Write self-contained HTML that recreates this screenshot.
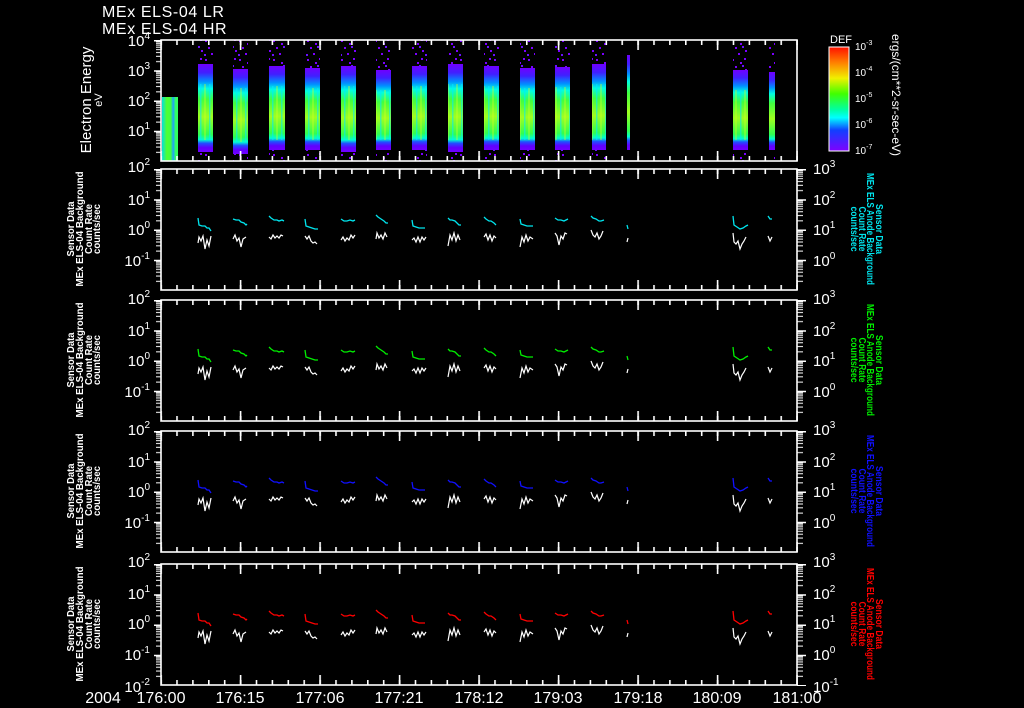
<!DOCTYPE html>
<html><head><meta charset="utf-8"><style>
html,body{margin:0;padding:0;background:#000;}
svg{display:block;}
text{font-family:"Liberation Sans",sans-serif;fill:#fff;}
</style></head><body>
<svg width="1024" height="708" viewBox="0 0 1024 708" xmlns="http://www.w3.org/2000/svg">
<defs>
<pattern id="mx" patternUnits="userSpaceOnUse" x="160.3" y="0" width="15.9" height="1"><rect x="0" y="0" width="1.6" height="1" fill="#fff"/></pattern>
<pattern id="Mx" patternUnits="userSpaceOnUse" x="160.3" y="0" width="79.5" height="1"><rect x="0" y="0" width="1.6" height="1" fill="#fff"/></pattern>
<pattern id="ly" patternUnits="userSpaceOnUse" x="154" y="0" width="7" height="30.25">
<rect x="0" y="0" width="7" height="1.5" fill="#fff"/>
<rect x="2" y="1.3" width="5" height="1" fill="#fff"/><rect x="2" y="2.8" width="5" height="1" fill="#fff"/><rect x="2" y="4.6" width="5" height="1" fill="#fff"/><rect x="2" y="6.7" width="5" height="1" fill="#fff"/><rect x="2" y="9.1" width="5" height="1" fill="#fff"/><rect x="2" y="12" width="5" height="1" fill="#fff"/><rect x="2" y="15.8" width="5" height="1" fill="#fff"/><rect x="2" y="21.1" width="5" height="1" fill="#fff"/>
</pattern>
<pattern id="ry" patternUnits="userSpaceOnUse" x="797" y="0" width="9" height="30.25">
<rect x="0" y="0" width="9" height="1.5" fill="#fff"/>
<rect x="0" y="1.3" width="6" height="1" fill="#fff"/><rect x="0" y="2.8" width="6" height="1" fill="#fff"/><rect x="0" y="4.6" width="6" height="1" fill="#fff"/><rect x="0" y="6.7" width="6" height="1" fill="#fff"/><rect x="0" y="9.1" width="6" height="1" fill="#fff"/><rect x="0" y="12" width="6" height="1" fill="#fff"/><rect x="0" y="15.8" width="6" height="1" fill="#fff"/><rect x="0" y="21.1" width="6" height="1" fill="#fff"/>
</pattern>
<pattern id="spk" patternUnits="userSpaceOnUse" x="0" y="0" width="17" height="19">
<rect x="1" y="2" width="2" height="2" fill="#7a00ff"/><rect x="9" y="5" width="2" height="2" fill="#7a00ff"/><rect x="13" y="1" width="2" height="2" fill="#7a00ff"/><rect x="4" y="9" width="2" height="2" fill="#7a00ff"/><rect x="14" y="12" width="2" height="2" fill="#7a00ff"/><rect x="7" y="15" width="2" height="2" fill="#7a00ff"/><rect x="0" y="16" width="2" height="2" fill="#6a10ff"/><rect x="11" y="8" width="2" height="2" fill="#6a10ff"/>
</pattern>
<pattern id="str" patternUnits="userSpaceOnUse" x="0" y="0" width="9" height="10">
<rect x="2" y="0" width="1.5" height="10" fill="#00e8ff" opacity="0.55"/><rect x="6" y="0" width="2" height="10" fill="#d0ff20" opacity="0.35"/>
</pattern>
<linearGradient id="sg" x1="0" y1="0" x2="0" y2="1">
<stop offset="0" stop-color="#7000ff"/><stop offset="0.1" stop-color="#4020ff"/><stop offset="0.2" stop-color="#0090ff"/><stop offset="0.28" stop-color="#00ffe0"/><stop offset="0.4" stop-color="#40ff40"/><stop offset="0.6" stop-color="#a0ff20"/><stop offset="0.8" stop-color="#30ff50"/><stop offset="0.86" stop-color="#00ffd0"/><stop offset="0.9" stop-color="#2050ff"/><stop offset="0.95" stop-color="#6000ff"/><stop offset="1" stop-color="#7000ff"/>
</linearGradient>
<linearGradient id="sh" x1="0" y1="0" x2="1" y2="0">
<stop offset="0" stop-color="#00e0e0"/><stop offset="0.3" stop-color="#50ff30"/><stop offset="0.55" stop-color="#40ff40"/><stop offset="0.7" stop-color="#20a0ff"/><stop offset="0.85" stop-color="#30ff60"/><stop offset="1" stop-color="#30ff60"/>
</linearGradient>
<linearGradient id="cb" x1="0" y1="0" x2="0" y2="1">
<stop offset="0" stop-color="#ff1000"/><stop offset="0.15" stop-color="#ff8000"/><stop offset="0.3" stop-color="#f0f000"/><stop offset="0.45" stop-color="#40ff00"/><stop offset="0.6" stop-color="#00ffa0"/><stop offset="0.68" stop-color="#00ffff"/><stop offset="0.8" stop-color="#1040ff"/><stop offset="1" stop-color="#8000ff"/>
</linearGradient>
<g id="frame">
<rect x="161" y="0" width="636" height="121" fill="none" stroke="#fff" stroke-width="1.6"/>
<rect x="161" y="0" width="637" height="5" fill="url(#mx)"/>
<rect x="161" y="0" width="637" height="10" fill="url(#Mx)"/>
<rect x="161" y="116" width="637" height="5" fill="url(#mx)"/>
<rect x="161" y="111" width="637" height="10" fill="url(#Mx)"/>
<rect x="154" y="0" width="7" height="121" fill="url(#ly)"/>
</g>
<g id="col" fill="none" stroke="currentColor" stroke-width="1.3">
<path d="M198 49 L199 56 L202 57 L205 57 L207 59 L209 59 L211 62"/>
<path d="M233 50 L236 51 L239 51 L241 53 L244 54 L246 56 L247 55"/>
<path d="M269 47 L271 49 L274 51 L277 51 L279 52 L282 51 L284 52"/>
<path d="M305 50 L306 57 L309 58 L312 59 L315 60 L318 60"/>
<path d="M341 50 L344 52 L347 52 L350 51 L353 52 L355 51"/>
<path d="M376 46 L378 48 L381 50 L384 52 L386 54 L388 54"/>
<path d="M412 51 L413 57 L416 58 L419 59 L422 59 L425 59"/>
<path d="M448 49 L450 51 L452 51 L455 52 L457 54 L459 56 L461 56"/>
<path d="M484 48 L486 50 L489 52 L491 52 L494 54 L496 56"/>
<path d="M520 50 L521 55 L524 56 L527 57 L530 57 L533 57"/>
<path d="M555 49 L558 51 L561 51 L564 52 L566 51 L568 50"/>
<path d="M591 47 L593 49 L596 50 L599 52 L601 52 L604 51"/>
<path d="M627 56 L628 60"/>
<path d="M733 47 L734 56 L737 58 L740 60 L743 59 L746 57 L748 56"/>
<path d="M768 47 L770 50 L772 50"/>
</g>
<g id="wht" fill="none" stroke="#fff" stroke-width="1.2">
<path d="M198 74 L199 68 L201 72 L203 67 L205 80 L207 71 L209 77 L211 67"/>
<path d="M233 70 L235 66 L237 72 L239 69 L241 78 L243 70 L246 68"/>
<path d="M269 68 L271 70 L273 66 L275 69 L277 67 L279 69 L281 66 L283 67"/>
<path d="M305 67 L307 70 L309 67 L311 72 L313 74 L315 73 L317 75"/>
<path d="M341 71 L343 68 L345 72 L347 69 L349 71 L351 66 L353 69 L355 66"/>
<path d="M376 70 L377 64 L379 69 L381 66 L383 70 L385 64 L387 68"/>
<path d="M412 71 L414 69 L416 73 L418 68 L420 73 L422 68 L424 71 L426 68"/>
<path d="M448 77 L450 66 L452 71 L454 64 L456 72 L458 66 L460 71"/>
<path d="M484 68 L486 65 L488 71 L490 66 L492 72 L494 67 L496 69"/>
<path d="M520 78 L522 68 L524 73 L526 66 L528 72 L530 68 L533 70"/>
<path d="M555 64 L557 67 L559 76 L561 67 L563 70 L565 64 L567 65"/>
<path d="M591 61 L593 66 L595 68 L597 64 L599 70 L601 67 L603 62"/>
<path d="M627 73 L628 69"/>
<path d="M733 64 L734 73 L736 75 L738 72 L740 80 L742 75 L744 72 L746 68"/>
<path d="M768 67 L770 72 L772 68"/>
</g>
</defs>

<text x="102" y="17" font-size="16" letter-spacing="0.6">MEx ELS-04 LR</text>
<text x="102" y="34" font-size="16" letter-spacing="0.6">MEx ELS-04 HR</text>

<g>
<rect x="162" y="97" width="16" height="64" fill="url(#sh)"/>
<g fill="url(#spk)">
<rect x="198" y="40" width="15" height="24"/><rect x="233" y="40" width="15" height="29"/><rect x="269" y="40" width="16" height="26"/><rect x="305" y="40" width="15" height="28"/><rect x="341" y="40" width="15" height="26"/><rect x="376" y="40" width="15" height="30"/><rect x="412" y="40" width="15" height="26"/><rect x="448" y="40" width="15" height="24"/><rect x="484" y="40" width="15" height="26"/><rect x="520" y="40" width="15" height="28"/><rect x="555" y="40" width="15" height="27"/><rect x="592" y="40" width="14" height="24"/><rect x="733" y="40" width="15" height="30"/><rect x="769" y="40" width="6" height="32"/>
<rect x="198" y="150" width="15" height="11"/><rect x="233" y="152" width="15" height="9"/><rect x="269" y="150" width="16" height="11"/><rect x="305" y="150" width="15" height="11"/><rect x="341" y="150" width="15" height="11"/><rect x="376" y="150" width="15" height="11"/><rect x="412" y="150" width="15" height="11"/><rect x="448" y="150" width="15" height="11"/><rect x="484" y="150" width="15" height="11"/><rect x="520" y="150" width="15" height="11"/><rect x="555" y="150" width="15" height="11"/><rect x="592" y="150" width="14" height="11"/><rect x="733" y="150" width="15" height="11"/><rect x="769" y="150" width="6" height="11"/>
</g>
<g fill="url(#sg)">
<rect x="198" y="64" width="15" height="88"/><rect x="233" y="69" width="15" height="85"/><rect x="269" y="66" width="16" height="84"/><rect x="305" y="68" width="15" height="82"/><rect x="341" y="66" width="15" height="86"/><rect x="376" y="70" width="15" height="80"/><rect x="412" y="66" width="15" height="84"/><rect x="448" y="64" width="15" height="88"/><rect x="484" y="66" width="15" height="84"/><rect x="520" y="68" width="15" height="82"/><rect x="555" y="67" width="15" height="83"/><rect x="592" y="64" width="14" height="86"/><rect x="627" y="55" width="3" height="95"/><rect x="733" y="70" width="15" height="80"/><rect x="769" y="72" width="6" height="78"/>
</g>
<g fill="url(#str)">
<rect x="198" y="84" width="15" height="56"/><rect x="233" y="88" width="15" height="54"/><rect x="269" y="86" width="16" height="54"/><rect x="305" y="88" width="15" height="52"/><rect x="341" y="86" width="15" height="54"/><rect x="376" y="90" width="15" height="50"/><rect x="412" y="86" width="15" height="54"/><rect x="448" y="84" width="15" height="56"/><rect x="484" y="86" width="15" height="54"/><rect x="520" y="88" width="15" height="52"/><rect x="555" y="87" width="15" height="53"/><rect x="592" y="84" width="14" height="56"/><rect x="733" y="90" width="15" height="50"/>
</g>
<use href="#frame" transform="translate(0,40)"/>
</g>

<text x="150" y="46" font-size="15" text-anchor="end">10<tspan dy="-7" font-size="10">4</tspan></text>
<text x="150" y="76" font-size="15" text-anchor="end">10<tspan dy="-7" font-size="10">3</tspan></text>
<text x="150" y="106" font-size="15" text-anchor="end">10<tspan dy="-7" font-size="10">2</tspan></text>
<text x="150" y="136" font-size="15" text-anchor="end">10<tspan dy="-7" font-size="10">1</tspan></text>
<text transform="translate(91,100) rotate(-90)" font-size="15" text-anchor="middle">Electron Energy</text>
<text transform="translate(102,100) rotate(-90)" font-size="11" text-anchor="middle">eV</text>

<rect x="829" y="47" width="20" height="104" fill="url(#cb)" stroke="#fff" stroke-width="1"/>
<text x="830" y="43" font-size="11">DEF</text>
<text x="855" y="50" font-size="10">10<tspan dy="-5" font-size="7">-3</tspan></text>
<text x="855" y="76" font-size="10">10<tspan dy="-5" font-size="7">-4</tspan></text>
<text x="855" y="102" font-size="10">10<tspan dy="-5" font-size="7">-5</tspan></text>
<text x="855" y="128" font-size="10">10<tspan dy="-5" font-size="7">-6</tspan></text>
<text x="855" y="154" font-size="10">10<tspan dy="-5" font-size="7">-7</tspan></text>
<text transform="translate(892,95) rotate(90)" font-size="12" text-anchor="middle">ergs/(cm**2-sr-sec-eV)</text>

<g transform="translate(0,169)"><use href="#frame"/><rect x="797" y="0" width="9" height="121" fill="url(#ry)"/><use href="#col" style="color:#00e5ee"/><use href="#wht"/></g>
<g transform="translate(0,300)"><use href="#frame"/><rect x="797" y="0" width="9" height="121" fill="url(#ry)"/><use href="#col" style="color:#00ee00"/><use href="#wht"/></g>
<g transform="translate(0,431)"><use href="#frame"/><rect x="797" y="0" width="9" height="121" fill="url(#ry)"/><use href="#col" style="color:#1010ff"/><use href="#wht"/></g>
<g transform="translate(0,564)"><use href="#frame"/><rect x="797" y="0" width="9" height="122" fill="url(#ry)"/><use href="#col" style="color:#ff0000"/><use href="#wht"/></g>

<g font-size="15" text-anchor="end">
<text x="150" y="172">10<tspan dy="-7" font-size="10">2</tspan></text>
<text x="150" y="205">10<tspan dy="-7" font-size="10">1</tspan></text>
<text x="150" y="235">10<tspan dy="-7" font-size="10">0</tspan></text>
<text x="150" y="266">10<tspan dy="-7" font-size="10">-1</tspan></text>
<text x="150" y="304">10<tspan dy="-7" font-size="10">2</tspan></text>
<text x="150" y="336">10<tspan dy="-7" font-size="10">1</tspan></text>
<text x="150" y="366">10<tspan dy="-7" font-size="10">0</tspan></text>
<text x="150" y="397">10<tspan dy="-7" font-size="10">-1</tspan></text>
<text x="150" y="435">10<tspan dy="-7" font-size="10">2</tspan></text>
<text x="150" y="467">10<tspan dy="-7" font-size="10">1</tspan></text>
<text x="150" y="497">10<tspan dy="-7" font-size="10">0</tspan></text>
<text x="150" y="528">10<tspan dy="-7" font-size="10">-1</tspan></text>
<text x="150" y="567">10<tspan dy="-7" font-size="10">2</tspan></text>
<text x="150" y="599">10<tspan dy="-7" font-size="10">1</tspan></text>
<text x="150" y="629">10<tspan dy="-7" font-size="10">0</tspan></text>
<text x="150" y="660">10<tspan dy="-7" font-size="10">-1</tspan></text>
<text x="150" y="692">10<tspan dy="-7" font-size="10">-2</tspan></text>
</g>
<g font-size="15">
<text x="813" y="174">10<tspan dy="-7" font-size="10">3</tspan></text>
<text x="813" y="205">10<tspan dy="-7" font-size="10">2</tspan></text>
<text x="813" y="235">10<tspan dy="-7" font-size="10">1</tspan></text>
<text x="813" y="266">10<tspan dy="-7" font-size="10">0</tspan></text>
<text x="813" y="304">10<tspan dy="-7" font-size="10">3</tspan></text>
<text x="813" y="336">10<tspan dy="-7" font-size="10">2</tspan></text>
<text x="813" y="366">10<tspan dy="-7" font-size="10">1</tspan></text>
<text x="813" y="397">10<tspan dy="-7" font-size="10">0</tspan></text>
<text x="813" y="435">10<tspan dy="-7" font-size="10">3</tspan></text>
<text x="813" y="467">10<tspan dy="-7" font-size="10">2</tspan></text>
<text x="813" y="497">10<tspan dy="-7" font-size="10">1</tspan></text>
<text x="813" y="528">10<tspan dy="-7" font-size="10">0</tspan></text>
<text x="813" y="567">10<tspan dy="-7" font-size="10">3</tspan></text>
<text x="813" y="599">10<tspan dy="-7" font-size="10">2</tspan></text>
<text x="813" y="629">10<tspan dy="-7" font-size="10">1</tspan></text>
<text x="813" y="660">10<tspan dy="-7" font-size="10">0</tspan></text>
<text x="813" y="692">10<tspan dy="-7" font-size="10">-1</tspan></text>
</g>

<g font-size="10" font-weight="bold" text-anchor="middle">
<g transform="translate(0,229)"><text transform="translate(74,0) rotate(-90)" textLength="55" lengthAdjust="spacingAndGlyphs">Sensor Data</text><text transform="translate(83,0) rotate(-90)" textLength="115" lengthAdjust="spacingAndGlyphs">MEx ELS-04 Background</text><text transform="translate(92,0) rotate(-90)" textLength="50" lengthAdjust="spacingAndGlyphs">Count Rate</text><text transform="translate(100,0) rotate(-90)" textLength="50" lengthAdjust="spacingAndGlyphs">counts/sec</text></g>
<g transform="translate(0,360)"><text transform="translate(74,0) rotate(-90)" textLength="55" lengthAdjust="spacingAndGlyphs">Sensor Data</text><text transform="translate(83,0) rotate(-90)" textLength="115" lengthAdjust="spacingAndGlyphs">MEx ELS-04 Background</text><text transform="translate(92,0) rotate(-90)" textLength="50" lengthAdjust="spacingAndGlyphs">Count Rate</text><text transform="translate(100,0) rotate(-90)" textLength="50" lengthAdjust="spacingAndGlyphs">counts/sec</text></g>
<g transform="translate(0,491)"><text transform="translate(74,0) rotate(-90)" textLength="55" lengthAdjust="spacingAndGlyphs">Sensor Data</text><text transform="translate(83,0) rotate(-90)" textLength="115" lengthAdjust="spacingAndGlyphs">MEx ELS-04 Background</text><text transform="translate(92,0) rotate(-90)" textLength="50" lengthAdjust="spacingAndGlyphs">Count Rate</text><text transform="translate(100,0) rotate(-90)" textLength="50" lengthAdjust="spacingAndGlyphs">counts/sec</text></g>
<g transform="translate(0,624)"><text transform="translate(74,0) rotate(-90)" textLength="55" lengthAdjust="spacingAndGlyphs">Sensor Data</text><text transform="translate(83,0) rotate(-90)" textLength="115" lengthAdjust="spacingAndGlyphs">MEx ELS-04 Background</text><text transform="translate(92,0) rotate(-90)" textLength="50" lengthAdjust="spacingAndGlyphs">Count Rate</text><text transform="translate(100,0) rotate(-90)" textLength="50" lengthAdjust="spacingAndGlyphs">counts/sec</text></g>
</g>

<g font-size="10" font-weight="bold" text-anchor="middle">
<g transform="translate(0,229)" style="fill:#00e5ee"><text transform="translate(876,0) rotate(90)" style="fill:#00e5ee" textLength="50" lengthAdjust="spacingAndGlyphs">Sensor Data</text><text transform="translate(867,0) rotate(90)" style="fill:#00e5ee" textLength="112" lengthAdjust="spacingAndGlyphs">MEx ELS Anode Background</text><text transform="translate(859,0) rotate(90)" style="fill:#00e5ee" textLength="45" lengthAdjust="spacingAndGlyphs">Count Rate</text><text transform="translate(851,0) rotate(90)" style="fill:#00e5ee" textLength="45" lengthAdjust="spacingAndGlyphs">counts/sec</text></g>
<g transform="translate(0,360)"><text transform="translate(876,0) rotate(90)" style="fill:#00ee00" textLength="50" lengthAdjust="spacingAndGlyphs">Sensor Data</text><text transform="translate(867,0) rotate(90)" style="fill:#00ee00" textLength="112" lengthAdjust="spacingAndGlyphs">MEx ELS Anode Background</text><text transform="translate(859,0) rotate(90)" style="fill:#00ee00" textLength="45" lengthAdjust="spacingAndGlyphs">Count Rate</text><text transform="translate(851,0) rotate(90)" style="fill:#00ee00" textLength="45" lengthAdjust="spacingAndGlyphs">counts/sec</text></g>
<g transform="translate(0,491)"><text transform="translate(876,0) rotate(90)" style="fill:#1010ff" textLength="50" lengthAdjust="spacingAndGlyphs">Sensor Data</text><text transform="translate(867,0) rotate(90)" style="fill:#1010ff" textLength="112" lengthAdjust="spacingAndGlyphs">MEx ELS Anode Background</text><text transform="translate(859,0) rotate(90)" style="fill:#1010ff" textLength="45" lengthAdjust="spacingAndGlyphs">Count Rate</text><text transform="translate(851,0) rotate(90)" style="fill:#1010ff" textLength="45" lengthAdjust="spacingAndGlyphs">counts/sec</text></g>
<g transform="translate(0,624)"><text transform="translate(876,0) rotate(90)" style="fill:#ff0000" textLength="50" lengthAdjust="spacingAndGlyphs">Sensor Data</text><text transform="translate(867,0) rotate(90)" style="fill:#ff0000" textLength="112" lengthAdjust="spacingAndGlyphs">MEx ELS Anode Background</text><text transform="translate(859,0) rotate(90)" style="fill:#ff0000" textLength="45" lengthAdjust="spacingAndGlyphs">Count Rate</text><text transform="translate(851,0) rotate(90)" style="fill:#ff0000" textLength="45" lengthAdjust="spacingAndGlyphs">counts/sec</text></g>
</g>

<g font-size="16" text-anchor="middle">
<text x="103" y="703">2004</text>
<text x="161" y="703">176:00</text>
<text x="240" y="703">176:15</text>
<text x="320" y="703">177:06</text>
<text x="399" y="703">177:21</text>
<text x="479" y="703">178:12</text>
<text x="558" y="703">179:03</text>
<text x="638" y="703">179:18</text>
<text x="717" y="703">180:09</text>
<text x="797" y="703">181:00</text>
</g>
</svg>
</body></html>
